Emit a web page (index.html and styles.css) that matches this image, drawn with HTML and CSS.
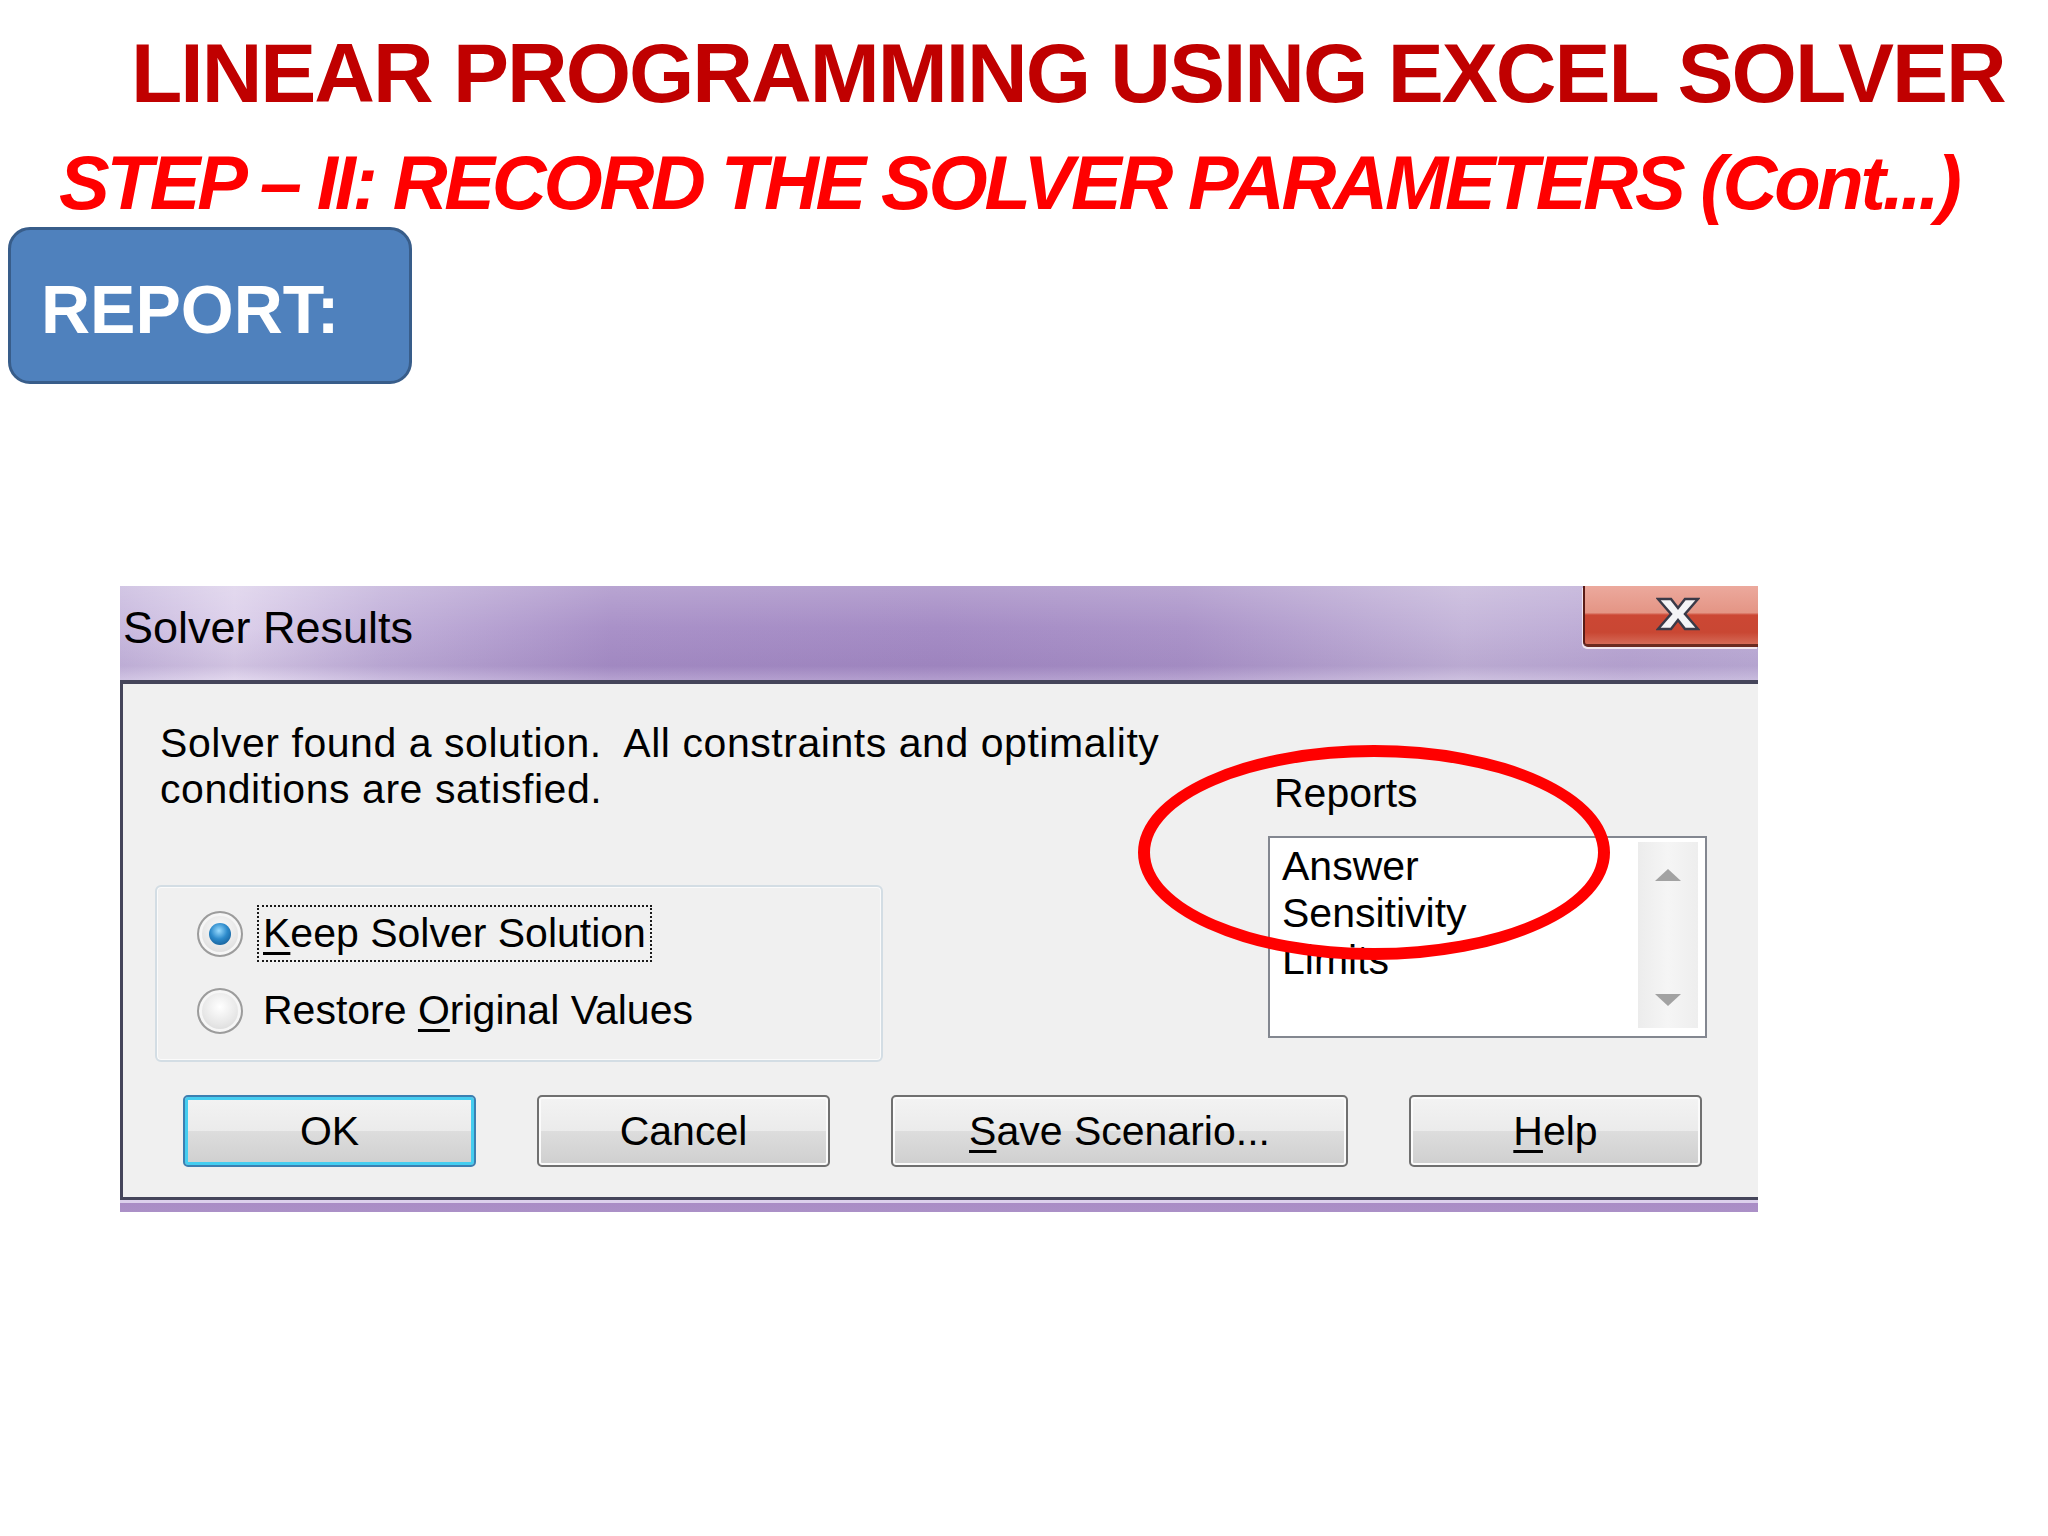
FILE: index.html
```html
<!DOCTYPE html>
<html lang="en">
<head>
  <meta charset="UTF-8" />
  <title>Linear Programming Using Excel Solver</title>
  <link rel="stylesheet" href="styles.css">
</head>
<body>
  <h1 class="title">LINEAR PROGRAMMING USING EXCEL SOLVER</h1>
  <h2 class="step">STEP – II: RECORD THE SOLVER PARAMETERS (Cont...)</h2>
  <div class="report-tag">REPORT:</div>

  <div class="dialog">
    <div class="titlebar">
      <span class="caption">Solver Results</span>
      <div class="close-btn">
        <svg width="44" height="34" viewBox="0 0 44 34">
          <polygon points="2,2 15,2 22,11 29,2 42,2 29,17 42,32 29,32 22,23 15,32 2,32 15,17" fill="#f4f4f6" stroke="#3a3a48" stroke-width="2.5"/>
        </svg>
      </div>
    </div>

    <div class="dlg-body">
      <div class="dlg-main">
        <div class="dlg-left">
          <p class="message">Solver found a solution.&nbsp; All constraints and optimality<br>conditions are satisfied.</p>
          <div class="group">
            <div class="radio-row">
              <span class="radio checked"></span>
              <span class="radio-label focus"><u>K</u>eep Solver Solution</span>
            </div>
            <div class="radio-row">
              <span class="radio"></span>
              <span class="radio-label">Restore <u>O</u>riginal Values</span>
            </div>
          </div>
        </div>

        <div class="dlg-right">
          <div class="reports-label">Reports</div>
          <div class="listbox">
            <ul class="list-items">
              <li>Answer</li>
              <li>Sensitivity</li>
              <li>Limits</li>
            </ul>
            <div class="scrollbar">
              <svg width="28" height="14" viewBox="0 0 28 14"><polygon points="14,1 27,13 1,13" fill="#a2a2a2"/></svg>
              <svg width="28" height="14" viewBox="0 0 28 14"><polygon points="1,1 27,1 14,13" fill="#a2a2a2"/></svg>
            </div>
          </div>
        </div>
      </div>

      <div class="buttons">
        <div class="btn default">OK</div>
        <div class="btn">Cancel</div>
        <div class="btn wide"><u>S</u>ave Scenario...</div>
        <div class="btn"><u>H</u>elp</div>
      </div>
    </div>
    <div class="dlg-strip"></div>

    <div class="highlight"></div>
  </div>
</body>
</html>
```

FILE: styles.css
```css
* {
  margin: 0;
  padding: 0;
  box-sizing: border-box;
}

body {
  background: #ffffff;
  font-family: "Liberation Sans", Arial, sans-serif;
}

.title {
  padding: 31px 0 0 131px;
  font-size: 84px;
  line-height: 84px;
  font-weight: bold;
  letter-spacing: -2px;
  color: #c00000;
  white-space: nowrap;
}

.step {
  margin-top: 30px;
  padding-left: 59px;
  font-size: 76px;
  line-height: 76px;
  font-weight: bold;
  font-style: italic;
  letter-spacing: -3.2px;
  color: #ff0000;
  white-space: nowrap;
}

.report-tag {
  margin: 6px 0 0 8px;
  width: 404px;
  height: 157px;
  padding: 45px 0 0 30px;
  background-color: #4f81bd;
  border: 3px solid #385d8a;
  border-radius: 22px;
  color: #ffffff;
  font-size: 68px;
  line-height: 68px;
  font-weight: bold;
}

/* dialog */

.dialog {
  position: relative;
  margin: 202px 0 0 120px;
  width: 1638px;
  color: #000000;
  font-size: 41px;
}

.titlebar {
  display: flex;
  justify-content: space-between;
  align-items: flex-start;
  height: 94px;
  background:
    linear-gradient(180deg, rgba(255, 255, 255, 0.18) 0%, rgba(255, 255, 255, 0) 45%, rgba(90, 60, 130, 0.1) 85%, rgba(255, 255, 255, 0.15) 100%),
    linear-gradient(90deg, #c8b9de 0%, #ddd1eb 7%, #c2b1da 16%, #a991c8 30%, #a58cc5 50%, #ab94c9 65%, #c5b6da 82%, #bcaad5 92%, #bfb0d8 100%);
}

.caption {
  padding: 20px 0 0 3px;
  font-size: 45px;
  line-height: 44px;
}

.close-btn {
  width: 175px;
  height: 61px;
  padding: 8px 0 0 71px;
  border-left: 2px solid #5a1c16;
  border-bottom: 3px solid #6b2a20;
  border-bottom-left-radius: 5px;
  background: linear-gradient(180deg, #eca99d 0%, #e49585 46%, #cc4734 50%, #c94733 80%, #d56a57 100%);
  box-shadow: -1px 2px 0 #f2e6f0;
}

.dlg-body {
  padding: 36px 0 30px 32px;
  background-color: #f0f0f0;
  border-left: 3px solid #45455a;
  border-top: 4px solid #45455a;
  border-bottom: 3px solid #45455a;
}

.dlg-main {
  display: grid;
  grid-template-columns: 1113px 439px;
}

.message {
  padding-left: 5px;
  line-height: 46px;
  letter-spacing: 0.55px;
  white-space: nowrap;
}

.group {
  display: flex;
  flex-direction: column;
  gap: 20px;
  margin-top: 73px;
  width: 728px;
  padding: 18px 0 21px 40px;
  border: 2px solid #d3dde4;
  border-radius: 6px;
  box-shadow: inset 0 0 0 1px #fbfbfb;
}

.radio-row {
  display: flex;
  align-items: center;
  gap: 14px;
  height: 57px;
}

.radio {
  display: flex;
  align-items: center;
  justify-content: center;
  width: 46px;
  height: 46px;
  border-radius: 50%;
  border: 2px solid #9c9c9c;
  background: radial-gradient(circle at 50% 40%, #ffffff 0%, #e6e6e6 55%, #cdcdcd 100%);
  box-shadow: inset 0 0 0 3px #f6f6f6;
}

.radio.checked::after {
  content: "";
  width: 22px;
  height: 22px;
  border-radius: 50%;
  background: radial-gradient(circle at 45% 35%, #9adcff 0%, #2c8acb 45%, #0c4c82 100%);
}

.radio-label {
  padding: 0 4px;
  height: 57px;
  line-height: 53px;
  border: 2px solid transparent;
  white-space: nowrap;
}

.radio-label.focus {
  border: 2px dotted #1a1a1a;
}

u {
  text-decoration-thickness: 3px;
  text-underline-offset: 5px;
}

.reports-label {
  margin-top: 50px;
  padding-left: 6px;
  line-height: 46px;
}

.listbox {
  display: flex;
  justify-content: space-between;
  margin-top: 20px;
  height: 202px;
  background-color: #ffffff;
  border: 2px solid #838790;
}

.list-items {
  list-style: none;
  padding: 5px 0 0 12px;
  line-height: 47px;
}

.scrollbar {
  display: flex;
  flex-direction: column;
  justify-content: space-between;
  align-items: center;
  width: 60px;
  margin: 4px 7px 8px 0;
  padding: 26px 0 21px;
  background: linear-gradient(90deg, #ececec 0%, #f5f5f5 50%, #eeeeee 100%);
}

.buttons {
  display: flex;
  gap: 61px;
  margin-top: 33px;
  padding-left: 28px;
}

.btn {
  display: flex;
  align-items: center;
  justify-content: center;
  width: 293px;
  height: 72px;
  border: 2px solid #707070;
  border-radius: 5px;
  background: linear-gradient(180deg, #f3f3f3 0%, #ebebeb 50%, #dddddd 50%, #cfcfcf 100%);
  box-shadow: inset 0 0 0 2px #fbfbfb;
  white-space: nowrap;
}

.btn.default {
  border-color: #3c7fb1;
  box-shadow: inset 0 0 0 3px #45cdf0;
}

.btn.wide {
  width: 457px;
}

.dlg-strip {
  height: 12px;
  background: linear-gradient(180deg, #dcd0ec 0%, #dcd0ec 25%, #a98cc5 25%, #ab90c7 100%);
}

/* red annotation ring drawn over the dialog */
.highlight {
  position: absolute;
  left: 1018px;
  top: 159px;
  width: 472px;
  height: 215px;
  border: 12px solid #ff0000;
  border-radius: 50%;
}
```
